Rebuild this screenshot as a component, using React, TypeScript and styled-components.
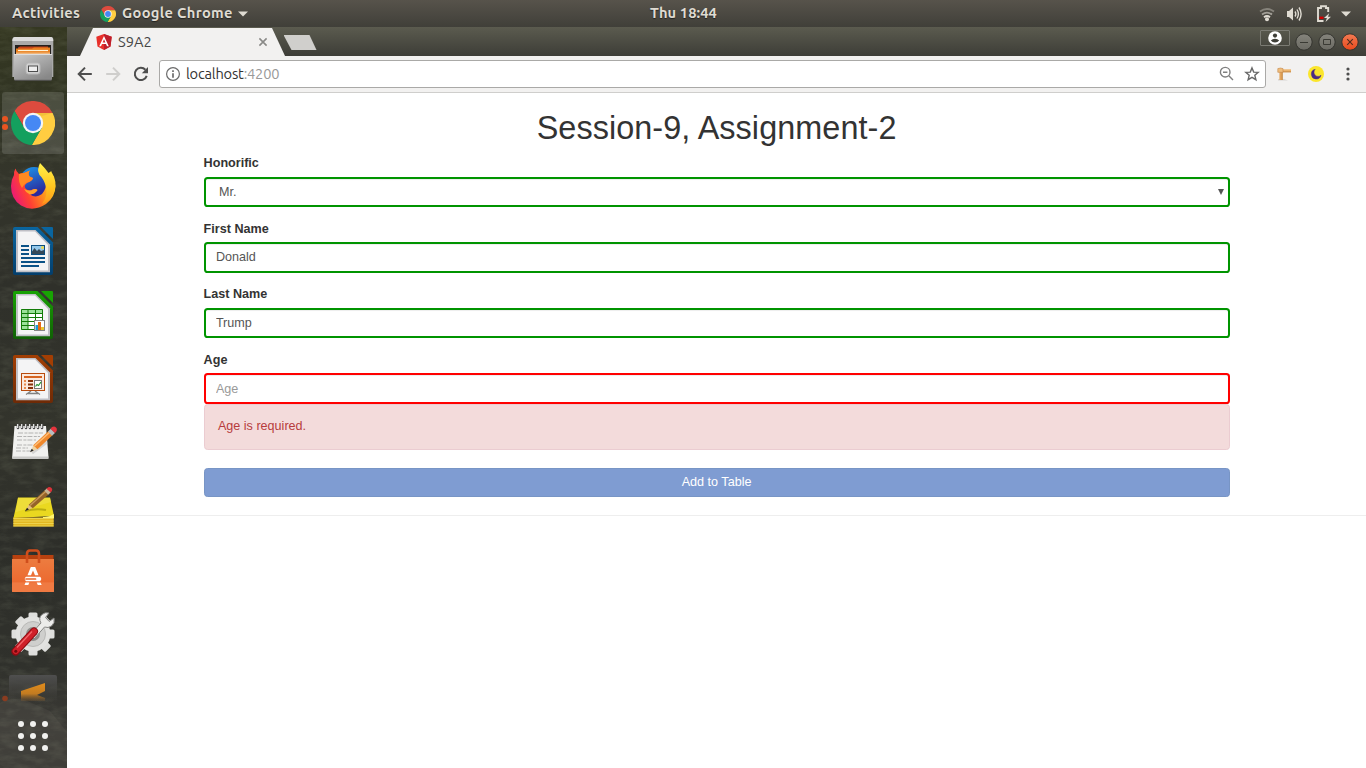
import React from "react";
import styled, { createGlobalStyle } from "styled-components";

const GlobalStyle = createGlobalStyle`
  *, *::before, *::after { box-sizing: border-box; }
  html, body { margin: 0; padding: 0; }
  body { width: 1366px; height: 768px; overflow: hidden; background: #fff; }
  svg { display: block; flex: none; }
`;

const uiFont = `"Ubuntu", "Noto Sans", "Open Sans", sans-serif`;
const pageFont = `"Liberation Sans", Arial, sans-serif`;

/* ---------- layout ---------- */

const Desktop = styled.div`
  display: flex;
  flex-direction: column;
  width: 1366px;
  height: 768px;
  overflow: hidden;
`;

const TopBar = styled.header`
  display: grid;
  grid-template-columns: 638px auto 1fr;
  align-items: center;
  height: 27px;
  flex: none;
  padding: 0 15px 0 12px;
  background: linear-gradient(#57534b, #403f39);
  color: #dfdbd2;
  font: 700 14.67px/26px ${uiFont};
  text-shadow: 0 1px 1px rgba(0, 0, 0, 0.5);
`;

const BarGroup = styled.div<{ $end?: boolean }>`
  display: flex;
  align-items: center;
  justify-content: ${(p) => (p.$end ? "flex-end" : "flex-start")};
`;

const BarLabel = styled.span<{ $width: number; $spacing?: number }>`
  width: ${(p) => p.$width}px;
  height: 27px;
  white-space: nowrap;
  letter-spacing: ${(p) => p.$spacing ?? 0}px;
`;

const AppMenu = styled.div`
  display: flex;
  align-items: center;
  gap: 6px;
  margin-left: 20px;
`;

const Tray = styled.div`
  display: flex;
  align-items: center;
`;

const Workspace = styled.div`
  display: flex;
  flex: 1;
  min-height: 0;
`;

const DockBar = styled.nav`
  position: relative;
  display: flex;
  flex-direction: column;
  width: 67px;
  flex: none;
  background: linear-gradient(#353822 0, #313423 70px, #34352b 150px, #2f302a 260px, #33342c 400px, #2d2e29 520px, #30312c 640px, #3a3935 700px, #32322e 741px);
`;

const Wallpaper = styled.svg`
  position: absolute;
  inset: 0;
`;

const Slot = styled.div<{ $height?: number }>`
  position: relative;
  width: 67px;
  height: ${(p) => p.$height ?? 64}px;
  flex: none;
`;

const Browser = styled.div`
  display: flex;
  flex-direction: column;
  flex: 1;
  min-width: 0;
  background: #fff;
`;

const TabStrip = styled.div`
  display: flex;
  justify-content: space-between;
  height: 29px;
  flex: none;
  background: linear-gradient(#5b5b4f, #3d3d37);
`;

const Tabs = styled.div`
  display: flex;
  padding: 1px 0 0 13px;
`;

const Tab = styled.div`
  display: flex;
  align-items: center;
  width: 205px;
  height: 28px;
  padding: 0 17px 0 16px;
  background: #f2f1f0;
  clip-path: polygon(13px 0, 192px 0, 205px 100%, 0 100%);
  font: 400 14.67px/28px ${uiFont};
  color: #454545;
`;

const TabTitle = styled.span`
  flex: 1;
  padding-left: 6px;
`;

const NewTab = styled.div`
  width: 33px;
  height: 15px;
  margin: 7px 0 0 -1.5px;
  background: #d0cfcc;
  clip-path: polygon(0 0, 26px 0, 33px 100%, 8px 100%);
`;

const WindowControls = styled.div`
  display: flex;
  gap: 5px;
  padding: 6px 7px 0 0;
`;

const Profile = styled.div`
  display: flex;
  justify-content: center;
  width: 30px;
  height: 16px;
  margin-top: -3px;
  border: 1px solid #7b7b73;
  border-radius: 1px;
`;

const Toolbar = styled.div`
  display: flex;
  align-items: center;
  height: 37px;
  flex: none;
  padding: 0 16px 0 10px;
  background: #f2f1f0;
  border-bottom: 1px solid #cfcecc;
`;

const NavButtons = styled.div`
  display: flex;
  gap: 12px;
  width: 82px;
`;

const AddressBar = styled.div`
  display: flex;
  align-items: center;
  width: 1107px;
  height: 28px;
  padding: 0 5px 0 6px;
  background: #fff;
  border: 1px solid #aaa9a7;
  border-radius: 3px;
  font: 400 14.67px/26px ${uiFont};
  color: #333;
`;

const Url = styled.span`
  flex: 1;
  padding: 0 0 1px 5px;
  letter-spacing: -0.22px;
`;

const Port = styled.span`
  color: #999;
`;

const BarActions = styled.div`
  display: flex;
  gap: 10px;
`;

const Extensions = styled.div`
  display: flex;
  flex: 1;
  justify-content: flex-end;
  align-items: center;
  gap: 16px;
  > :last-child { margin-left: 6px; }
`;

const Page = styled.main`
  flex: 1;
  font: 400 12.6px/18px ${pageFont};
  color: #333;
`;

const Container = styled.form`
  display: flex;
  flex-direction: column;
  width: 1026px;
  margin: 0 auto 0 136.6px;
`;

const Title = styled.h1`
  margin: 16px 0 7px;
  font: 400 32.4px/38px ${pageFont};
  letter-spacing: 0.07px;
  text-align: center;
`;

const Group = styled.div<{ $height: number }>`
  display: flex;
  flex-direction: column;
  height: ${(p) => p.$height}px;
`;

const Label = styled.label`
  height: 18px;
  margin-bottom: 4.5px;
  font-weight: 700;
`;

const Field = styled.input<{ $valid: boolean }>`
  width: 100%;
  height: 30.6px;
  padding: 0 10.3px;
  border: 2px solid ${(p) => (p.$valid ? "#009400" : "#ff0000")};
  border-radius: 3.6px;
  box-shadow: inset 0 1px 1px rgba(0, 0, 0, 0.075);
  background: #fff;
  color: #555;
  font: 400 12.6px/18px ${pageFont};
  outline: none;
  &::placeholder { color: #999; opacity: 1; }
`;

const SelectBox = styled.div`
  position: relative;
`;

const Select = styled.select`
  display: block;
  appearance: none;
  width: 100%;
  height: 30px;
  padding: 0 13.4px;
  border: 2px solid #009400;
  border-radius: 3.6px;
  box-shadow: inset 0 1px 1px rgba(0, 0, 0, 0.075);
  background: #fff;
  color: #555;
  font: 400 12.6px/18px ${pageFont};
`;

const SelectArrow = styled.svg`
  position: absolute;
  right: 6px;
  top: 12px;
`;

const Alert = styled.div`
  height: 46px;
  margin-bottom: 18px;
  padding: 12.4px 13.3px;
  border: 1px solid #ebccd1;
  border-radius: 3.6px;
  background: #f3dbdb;
  color: #b73b3d;
`;

const SubmitButton = styled.button`
  height: 29px;
  margin: 0;
  padding: 0 0 1px;
  border: 1px solid #7895c5;
  border-radius: 3.6px;
  background: #7f9cd2;
  color: #fff;
  font: 400 12.6px/18px ${pageFont};
`;

const Divider = styled.hr`
  height: 1px;
  margin: 18px 0 0;
  border: 0;
  background: #eee;
`;

/* ---------- icons ---------- */

const ChromeLogo = ({ size }: { size: number }) => (
  <svg width={size} height={size} viewBox="-22 -22 44 44">
    <path d="M-8.66 5L-18.46 -11.97A22 22 0 0 1 19.6 -10H0Z" fill="#dd4b3e" />
    <path d="M0-10H19.6A22 22 0 0 1-1.14 21.97L8.66 5Z" fill="#ffcd41" />
    <path d="M8.66 5L-1.14 21.97A22 22 0 0 1-18.46-11.97L-8.66 5Z" fill="#14a05e" />
    <path d="M0-10H19.6L9-7Z" fill="#d9a82e" opacity=".35" />
    <circle r="10.2" fill="#f5f5f5" />
    <circle r="8" fill="#4688f4" />
  </svg>
);

const CaretIcon = styled.svg<{ $gap?: number }>`
  margin-left: ${(p) => p.$gap ?? 0}px;
`;

const Caret = ({ gap }: { gap?: number }) => (
  <CaretIcon $gap={gap} width="10" height="6" viewBox="0 0 10 6"><path d="M0 .5H10L5 5.5Z" fill="#dfdbd2" /></CaretIcon>
);

const TrayIcon = styled.svg<{ $gap?: number }>`
  margin-left: ${(p) => p.$gap ?? 0}px;
`;

const TrayIcons = () => (
  <Tray>
    <TrayIcon width="16" height="18" viewBox="0 0 16 18" fill="none" strokeWidth="1.8">
      <path d="M1 6.5Q8 1.5 15 6.5" stroke="#86837b" />
      <path d="M3 9.5Q8 5.8 13 9.5" stroke="#a29f97" />
      <path d="M5 12.3Q8 9.8 11 12.3" stroke="#dfdbd2" />
      <circle cx="8" cy="14.3" r="2" fill="#dfdbd2" />
    </TrayIcon>
    <TrayIcon $gap={11} width="17" height="18" viewBox="0 0 17 18" fill="none" stroke="#dfdbd2" strokeWidth="1.4">
      <path d="M1 6H3L7 2.5V15.5L3 12H1Z" fill="#dfdbd2" stroke="none" />
      <path d="M9 6.5Q10.6 9 9 11.5M11 4.5Q13.8 9 11 13.5M13 2.5Q17.2 9 13 15.5" />
    </TrayIcon>
    <TrayIcon $gap={13} width="16" height="18" viewBox="0 0 16 18">
      <path d="M12.2 7V3H10V1.3H5V3H2V16H7.5" fill="none" stroke="#dfdbd2" strokeWidth="1.9" />
      <path d="M3.5 11.6H7.5V14H3.5Z" fill="#d40000" />
      <path d="M13.2 8.3L8 13H10.9L9.5 17L15 11.8H12Z" fill="#dfdbd2" />
    </TrayIcon>
    <Caret gap={9} />
  </Tray>
);

const AngularLogo = () => (
  <svg width="16" height="16" viewBox="0 0 16 16">
    <path d="M8 0L15.7 2.7L14.5 12.4L8 16L1.5 12.4L.3 2.7Z" fill="#e8302a" />
    <path d="M8 0L15.7 2.7L14.5 12.4L8 16Z" fill="#bd1f2b" />
    <path d="M8 1.9L3.2 12.2H5L6 9.9H10L11 12.2H12.8ZM8 5.2L9.4 8.4H6.6Z" fill="#fff" fillRule="evenodd" />
  </svg>
);

const TabClose = () => (
  <svg width="10" height="10" viewBox="0 0 10 10"><path d="M1.4 1.4L8.6 8.6M8.6 1.4L1.4 8.6" stroke="#8a8a88" strokeWidth="1.6" /></svg>
);

const WindowButton = ({ kind }: { kind: "min" | "max" | "close" }) => {
  const close = kind === "close";
  return (
    <svg width="18" height="18" viewBox="0 0 18 18" fill="none">
      <defs>
        <linearGradient id={`wb-${kind}`} x2="0" y2="1">
          <stop stopColor={close ? "#f37b53" : "#85847c"} />
          <stop offset="1" stopColor={close ? "#e8491c" : "#6b6a63"} />
        </linearGradient>
      </defs>
      <circle cx="9" cy="9" r="8.2" fill={`url(#wb-${kind})`} stroke="#34342f" />
      {kind === "min" && <path d="M5 9.5H13" stroke="#3a3a34" strokeWidth="1" />}
      {kind === "max" && <path d="M5.5 6.5H12.5V11.5H5.5Z" stroke="#3a3a34" strokeWidth="1" />}
      {close && <path d="M6.2 6.2L11.8 11.8M11.8 6.2L6.2 11.8" stroke="#4c2c1e" strokeWidth="1.1" />}
    </svg>
  );
};

const ProfileIcon = () => (
  <svg width="14" height="14" viewBox="0 0 14 14">
    <circle cx="7" cy="7" r="6.8" fill="#fff" />
    <circle cx="7" cy="4.6" r="2.1" fill="#3f3f38" />
    <path d="M2.8 9.6Q4.4 7.7 7 7.7T11.2 9.6Q9.6 11.5 7 11.5T2.8 9.6Z" fill="#3f3f38" />
  </svg>
);

const Arrow = ({ forward }: { forward?: boolean }) => (
  <svg width="16" height="16" viewBox="0 0 16 16" fill="none" stroke={forward ? "#cfcecc" : "#4e4e4e"} strokeWidth="2">
    {forward ? <path d="M1.2 8H14M8 1.6L14.3 8L8 14.4" /> : <path d="M14.8 8H2M8 1.6L1.7 8L8 14.4" />}
  </svg>
);

const Reload = () => (
  <svg width="16" height="16" viewBox="0 0 16 16" fill="none">
    <path d="M13.7 9.9A6.1 6.1 0 1 1 12.4 3.8" stroke="#4e4e4e" strokeWidth="2" />
    <path d="M15 1V7.2H8.8Z" fill="#4e4e4e" />
  </svg>
);

const InfoIcon = () => (
  <svg width="15" height="15" viewBox="0 0 15 15" fill="none" stroke="#6b6b6b">
    <circle cx="7" cy="7" r="6.4" strokeWidth="1.2" />
    <path d="M7 6.2V10.8M7 3.3V4.9" strokeWidth="1.7" />
  </svg>
);

const ZoomOut = () => (
  <svg width="15" height="15" viewBox="0 0 15 15" fill="none" stroke="#808080" strokeWidth="1.4">
    <circle cx="6.2" cy="6.2" r="4.8" /><path d="M4 6.2H8.4M9.8 9.8L14 14" />
  </svg>
);

const Star = () => (
  <svg width="16" height="16" viewBox="0 0 16 16" fill="none" stroke="#686868" strokeWidth="1.4">
    <path d="M8 1.9L9.7 6.1L14.2 6.4L10.8 9.3L11.9 13.7L8 11.3L4.1 13.7L5.2 9.3L1.8 6.4L6.3 6.1Z" />
  </svg>
);

const HammerExt = () => (
  <svg width="16" height="16" viewBox="0 0 16 16">
    <path d="M2 14.5H12L8 13H2Z" fill="#d8d6d3" />
    <path d="M6 3.3H15V6.3H6Z" fill="#eeb56d" /><path d="M6 5.8H15" stroke="#bd8140" strokeWidth=".8" />
    <path d="M3.4 5.5H6.6V14H3.4Z" fill="#e5a55b" /><path d="M6.2 6V14" stroke="#b9803c" strokeWidth=".8" />
    <path d="M1.8 2.6Q4.5 1.5 7 2.6V6.3H1.8Z" fill="#efbd7c" stroke="#c5884a" strokeWidth=".6" />
  </svg>
);

const MoonExt = () => (
  <svg width="16" height="16" viewBox="0 0 16 16">
    <circle cx="8" cy="8" r="8" fill="#fbe62c" />
    <path d="M7.2 3.3A4.9 4.9 0 1 0 13 9.2A3 3 0 1 1 7.2 3.3Z" fill="#4b2b84" stroke="#4b2b84" strokeWidth=".5" />
  </svg>
);

const MenuDots = () => (
  <svg width="4" height="16" viewBox="0 0 4 16" fill="#4e4e4e"><circle cx="2" cy="3" r="1.6" /><circle cx="2" cy="8" r="1.6" /><circle cx="2" cy="13" r="1.6" /></svg>
);

/* ---------- dock icons ---------- */

const DockSvg = ({ children, height = 64 }: { children: React.ReactNode; height?: number }) => (
  <svg width="67" height={height} viewBox={`0 0 67 ${height}`}>{children}</svg>
);

const FilesIcon = () => (
  <DockSvg>
    <defs>
      <linearGradient id="metal" x2=".7" y2="1"><stop stopColor="#c9c9c9" /><stop offset="1" stopColor="#888" /></linearGradient>
    </defs>
    <path d="M15 10H51Q53 10 53.3 12V50H12.3V12Q12.7 10 15 10Z" fill="#aaa" />
    <path d="M15 10H51Q53 10 53.3 14H12.3Q12.7 10 15 10Z" fill="#dcdcdc" />
    <path d="M15 18H51V29H15Z" fill="#25201d" />
    <path d="M20 19.5H48V22H18V20.5Z" fill="#c4431b" />
    <path d="M16 21.5H32L34 20.5H50V28H16Z" fill="#e9801f" />
    <path d="M18 23.5H48" stroke="#fff3d8" strokeWidth="1.2" />
    <path d="M16 25.5H50V28H16Z" fill="#f1b67a" />
    <path d="M14 28H52V52Q52 53 51 53H15Q14 53 14 52Z" fill="url(#metal)" />
    <path d="M14 27.5H52" stroke="#dedede" />
    <path d="M14.5 53.3H51.5" stroke="#585858" />
    <rect x="26" y="36" width="14" height="11" rx="2.5" fill="#d1d1d1" stroke="#b7b7b7" />
    <rect x="28.5" y="39" width="9" height="5.5" fill="#eee" stroke="#4d4d4d" />
  </DockSvg>
);

const ChromeSlot = styled(Slot)`
  display: flex;
  align-items: center;
  padding-left: 11px;
  &::before {
    content: "";
    position: absolute;
    inset: 1px 3px 1px 2px;
    border-radius: 3px;
    background: rgba(255, 255, 255, 0.13);
  }
  > svg { position: relative; }
`;

const RunningDots = styled.div`
  position: absolute;
  left: 2px;
  top: 25px;
  display: grid;
  gap: 2px;
`;

const RunningDot = styled.i`
  width: 6px;
  height: 6px;
  border-radius: 50%;
  background: #e95420;
`;

const FirefoxIcon = () => (
  <DockSvg>
    <defs>
      <linearGradient id="fox" x1=".95" y1=".25" x2=".05" y2=".6">
        <stop offset=".1" stopColor="#ffc61f" /><stop offset=".4" stopColor="#ff8a1e" /><stop offset=".72" stopColor="#ff4133" /><stop offset="1" stopColor="#ee1f6c" />
      </linearGradient>
      <linearGradient id="globe" x2=".4" y2="1"><stop stopColor="#1a9df0" /><stop offset=".9" stopColor="#2b2a9c" /></linearGradient>
      <linearGradient id="flame" x2="0" y2="1"><stop stopColor="#fff04a" /><stop offset=".6" stopColor="#ffc31e" /><stop offset="1" stopColor="#ff9a1c" /></linearGradient>
    </defs>
    <ellipse cx="34" cy="28" rx="15" ry="16" fill="url(#globe)" />
    <path d="M15.5 13.5Q16 16.5 19 19Q21.5 17.6 24 18L30 15.5Q27.5 18 29.5 21.5L33 23Q32.5 26 27 28Q23 31 26 34Q29 36.5 32.5 34.5Q35.5 33.5 37.5 35Q35 39 30 39.5Q36 43.5 42 39Q47 33 46 26L53.5 21L55.5 31Q55.3 42 46 49Q33 57.5 21 50.5Q11 44 11 31Q11 25 14 20Q13.5 17 15.5 13.5Z" fill="url(#fox)" />
    <path d="M40 8Q45 13 48.5 18Q52 15 51.5 17Q58 27 54 37Q50 46 42 49Q48 41 46 32Q44 24 39.5 20Q36.5 15 40 8Z" fill="url(#flame)" />
    <path d="M24 18L30 15.5Q27.5 18 29.5 21.5L33 23Q32 26 27 27.5Q23 30 22 33Q18 27 19 19Z" fill="#ff8a22" />
    <path d="M24 34Q30 37 33 34.4Q36 33.5 37.5 35Q35 39 30 39.5Q26 38 24 34Z" fill="#ffa22a" />
  </DockSvg>
);

const OfficeDoc = ({ color, fold, children }: { color: string; fold: string; children: React.ReactNode }) => (
  <DockSvg>
    <defs>
      <linearGradient id={`doc-${color.slice(1)}`} x2="0" y2="1"><stop stopColor={fold} /><stop offset="1" stopColor={color} /></linearGradient>
    </defs>
    <path d="M15 8H37.5L53 23.5V54Q53 56 51 56H15Q13 56 13 54V10Q13 8 15 8Z" fill={`url(#doc-${color.slice(1)})`} />
    <path d="M41 8H52Q53 8 53 9V20Z" fill={fold} />
    <path d="M16 11H35.5L50 25.5V53.3H16Z" fill="#bfbfc5" />
    <path d="M18 12.5H35L48 26V51.5H18Z" fill="#f4f4f5" />
    {children}
  </DockSvg>
);

const WriterIcon = () => (
  <OfficeDoc color="#033e6c" fold="#0a659f">
    <path d="M21 27H29M21 31H29M21 35H29M21 39H45M21 43H45M21 47H39" stroke="#0b5287" strokeWidth="2" />
    <rect x="31.5" y="26.5" width="13" height="9" fill="#94c8eb" stroke="#0b4e80" />
    <circle cx="42.5" cy="28.5" r="1.5" fill="#efd94c" />
    <path d="M32 35V32.5L34.5 29L37 32L39 30L41 32L44 31V35Z" fill="#344858" />
  </OfficeDoc>
);

const CalcIcon = () => (
  <OfficeDoc color="#106005" fold="#18a303">
    <path d="M21 26H43V47H21Z" fill="#fff" /><path d="M21 26H43V30H21ZM21 30H28V47H21Z" fill="#9be29a" />
    <path d="M21.5 26.5H42.5V46.5H21.5ZM28 26V47M35.5 26V47M21 30.5H43M21 34.5H43M21 38.5H43M21 42.5H43" fill="none" stroke="#127b08" />
    <rect x="34.5" y="37.5" width="10" height="10" fill="#fff" stroke="#858585" />
    <path d="M35.5 42H38V47H35.5Z" fill="#1e9bd5" /><path d="M38 39H41V47H38Z" fill="#e66c18" /><path d="M41 44H44V47H41Z" fill="#ecc62f" />
  </OfficeDoc>
);

const ImpressIcon = () => (
  <OfficeDoc color="#6e2a06" fold="#a33e03">
    <path d="M31 44L26 47.5M35 44L40 47.5M28 46.5H38" stroke="#818181" strokeWidth="1.4" fill="none" />
    <rect x="21.5" y="26.5" width="23" height="17" fill="#fbe9dd" stroke="#b84b0d" />
    <path d="M24 30H42" stroke="#d66421" strokeWidth="2" />
    <path d="M24 34H26M24 37.5H26M24 41H26" stroke="#e88b4e" strokeWidth="2" />
    <path d="M28 34H33M28 37.5H33M28 41H33" stroke="#87320a" strokeWidth="2" />
    <rect x="34.5" y="33.5" width="7" height="8" fill="#fff" stroke="#777" />
    <path d="M35.5 39.5L37 37.5L38.5 38.5L41 35" fill="none" stroke="#26942d" strokeWidth="1.2" />
  </OfficeDoc>
);

const GeditIcon = () => (
  <DockSvg>
    <path d="M14.5 15H46L48.5 46Q48.5 47.5 47 47.5H13Q12 47.5 12.2 46Z" fill="#f1f1ef" />
    <path d="M12.3 45.5H48.5V48H12.3Z" fill="#c9c9c7" />
    <path d="M18 22H43M17 25.5H40M17 29H36M17 34H33M16 37H28M16 40H31" stroke="#adadab" strokeWidth=".9" strokeDasharray="5 1.4 3 1" />
    <path d="M18 14V17M22 14V17M26 14V17M30 14V17M34 14V17M38 14V17M42 14V17" stroke="#4c4c4c" strokeWidth="2.6" strokeLinecap="round" />
    <path d="M17.6 13V17M21.6 13V17M25.6 13V17M29.6 13V17M33.6 13V17M37.6 13V17M41.6 13V17" stroke="#e1e1df" strokeWidth="1.3" />
    <path d="M32 42L47 31" stroke="#bbb" strokeWidth="3" opacity=".5" />
    <path d="M30.5 41L33.5 34L37.5 38Z" fill="#efd29f" /><path d="M30 41.3L31.7 37.8L33.7 39.6Z" fill="#292929" />
    <path d="M33.2 34.3L48.5 20L52.5 24.3L37.5 38.3Z" fill="#ef882c" />
    <path d="M34.5 35L49.7 21.2" stroke="#ffbd74" strokeWidth="1.5" />
    <path d="M48 20.5L51 17.5L55 22L52 24.8Z" fill="#b8bcc0" />
    <path d="M50.5 18Q52 15 55 15.7Q58 17.5 56.3 20.5L55 22Z" fill="#e5343d" />
  </DockSvg>
);

const NotesIcon = () => (
  <DockSvg>
    <path d="M18 22.5H50L54 41L13.5 43Z" fill="#ead820" /><path d="M18 23H50L51 27L16 37Z" fill="#f0e14b" opacity=".6" />
    <path d="M13.3 42.5H53.7V51.5H13.3Z" fill="#e2b822" />
    <path d="M13.3 43.5H53.7M13.3 46H53.7M13.3 48.5H53.7M13.3 51H53.7" stroke="#f3df62" strokeWidth=".7" />
    <path d="M43 42Q49 42.5 54 39V43H43Z" fill="#fff470" />
    <path d="M25 36Q36 33 46 35" stroke="#a1960b" strokeWidth="2" fill="none" opacity=".65" />
    <path d="M25.5 36L29 29.5L32.5 33Z" fill="#e2bc80" /><path d="M25 36.3L27 32.8L29 34.6Z" fill="#27251a" />
    <path d="M28.7 29.8L44.5 15.5L48.5 19.5L32.8 33.3Z" fill="#956329" /><path d="M30 30.5L45.7 16.5" stroke="#c99a58" strokeWidth="1.3" />
    <path d="M44.3 15.7L47 13.2L51 17L48.2 19.7Z" fill="#c7b494" />
    <path d="M46.5 13.7L48.2 12.2Q51 11.5 52.2 14Q52.5 16 50.7 17.4Z" fill="#d93239" />
  </DockSvg>
);

const SoftwareIcon = () => (
  <DockSvg>
    <defs><linearGradient id="bag" x2="0" y2="1"><stop stopColor="#ec7c40" /><stop offset=".7" stopColor="#ec6a30" /><stop offset=".72" stopColor="#f07a42" /></linearGradient></defs>
    <path d="M12.5 16H53.5V20.5H12.5Z" fill="#b8410f" />
    <path d="M12 20H54V52.5Q54 53 53 53H13Q12 53 12 52.5Z" fill="url(#bag)" />
    <path d="M27 24V15Q27 11.5 30 11.5H36Q39 11.5 39 15V24" fill="none" stroke="#cf4e1c" strokeWidth="2.6" />
    <path d="M30.8 28H35.2L38.5 36.2H35L33 31.5L31 36.2H27.5Z" fill="#fff" />
    <path d="M26 37.8H40Q42.5 40 40 42.3H26Q23.5 40 26 37.8Z" fill="#fff" />
    <path d="M26 40H35.5" stroke="#e96a32" strokeWidth="1.7" strokeLinecap="round" />
    <path d="M25.5 43.5H29.3L28.3 46H24.5ZM36.7 43.5H40.5L41.7 46H37.8Z" fill="#fff" />
  </DockSvg>
);

const SettingsIcon = () => (
  <DockSvg>
    <g transform="translate(33 31)">
      {[0, 45, 90, 135].map((a) => (
        <rect key={a} x="-4.5" y="-21.5" width="9" height="43" rx="1.5" fill="#dededc" transform={`rotate(${a})`} />
      ))}
      <circle r="17.5" fill="#e2e2e0" /><circle r="12.5" fill="#cfcfcd" stroke="#b9b9b7" /><circle r="7" fill="#8e8e8b" />
    </g>
    <path d="M30 32L41 20Q38 15 42 11.5Q45 8.8 49 10L45.5 14.5L49.2 18.5L54 15Q55.2 20 51.5 23Q48 25.5 44.5 24L34 36Z" fill="#ececea" stroke="#858583" strokeWidth="1" />
    <path d="M15.5 48.5L34 28.5" stroke="#8c0b12" strokeWidth="8" strokeLinecap="round" />
    <path d="M15.8 48L34 28.5" stroke="#cf2029" strokeWidth="6.2" strokeLinecap="round" />
    <path d="M17 44.5L32 28.5" stroke="#f2676b" strokeWidth="1.2" />
    <circle cx="15.8" cy="48.3" r="1.5" fill="#71080e" />
  </DockSvg>
);

const SublimeIcon = () => (
  <DockSvg height={43}>
    <defs>
      <linearGradient id="tile" x2="0" y2="1"><stop stopColor="#4f4f4f" /><stop offset="1" stopColor="#45443f" stopOpacity="0" /></linearGradient>
      <linearGradient id="sub" x2="0" y2="1"><stop stopColor="#e28c1b" /><stop offset=".6" stopColor="#c27b21" /><stop offset="1" stopColor="#80592c" stopOpacity=".25" /></linearGradient>
    </defs>
    <path d="M9 10Q9 8 11 8H55Q57 8 57 10V36H9Z" fill="url(#tile)" />
    <path d="M21 24L45 16V24L37 28L45 31V34H21Z" fill="url(#sub)" />
    <circle cx="5" cy="31.5" r="2.8" fill="#8a3c20" />
  </DockSvg>
);

const AppsGrid = styled.div`
  position: relative;
  display: grid;
  grid-template-columns: repeat(3, 6px);
  gap: 6px;
  padding: 11px 0 0 18px;
`;

const AppsDot = styled.i`
  width: 6px;
  height: 6px;
  border-radius: 50%;
  background: #f1f1ef;
`;

const Dock = () => (
  <DockBar>
    <Wallpaper width="67" height="741" viewBox="0 0 67 741">
      <filter id="grain" x="0" y="0" width="100%" height="100%">
        <feTurbulence type="fractalNoise" baseFrequency=".06 .14" numOctaves="4" seed="8" />
        <feColorMatrix values="0 0 0 0 .45  0 0 0 0 .48  0 0 0 0 .33  1.3 0 0 0 -.52" />
      </filter>
      <path d="M0 676Q10 670 25 673L50 684L67 705V741H0Z" fill="#4b4944" opacity=".5" />
      <rect width="67" height="741" filter="url(#grain)" opacity=".2" />
    </Wallpaper>
    <Slot><FilesIcon /></Slot>
    <ChromeSlot>
      <ChromeLogo size={44} />
      <RunningDots><RunningDot /><RunningDot /></RunningDots>
    </ChromeSlot>
    <Slot><FirefoxIcon /></Slot>
    <Slot><WriterIcon /></Slot>
    <Slot><CalcIcon /></Slot>
    <Slot><ImpressIcon /></Slot>
    <Slot><GeditIcon /></Slot>
    <Slot><NotesIcon /></Slot>
    <Slot><SoftwareIcon /></Slot>
    <Slot><SettingsIcon /></Slot>
    <Slot $height={43}><SublimeIcon /></Slot>
    <AppsGrid>{Array.from({ length: 9 }, (_, i) => <AppsDot key={i} />)}</AppsGrid>
  </DockBar>
);

export default function App() {
  return (
    <Desktop>
      <GlobalStyle />
      <TopBar>
        <BarGroup>
          <BarLabel $width={68} $spacing={0.3}>Activities</BarLabel>
          <AppMenu>
            <ChromeLogo size={16} />
            <BarLabel $width={110} $spacing={0.33}>Google Chrome</BarLabel>
            <Caret />
          </AppMenu>
        </BarGroup>
        <BarLabel $width={68} $spacing={0.1}>Thu 18:44</BarLabel>
        <BarGroup $end><TrayIcons /></BarGroup>
      </TopBar>
      <Workspace>
        <Dock />
        <Browser>
          <TabStrip>
            <Tabs>
              <Tab><AngularLogo /><TabTitle>S9A2</TabTitle><TabClose /></Tab>
              <NewTab />
            </Tabs>
            <WindowControls>
              <Profile><ProfileIcon /></Profile>
              <WindowButton kind="min" />
              <WindowButton kind="max" />
              <WindowButton kind="close" />
            </WindowControls>
          </TabStrip>
          <Toolbar>
            <NavButtons><Arrow /><Arrow forward /><Reload /></NavButtons>
            <AddressBar>
              <InfoIcon />
              <Url>localhost<Port>:4200</Port></Url>
              <BarActions><ZoomOut /><Star /></BarActions>
            </AddressBar>
            <Extensions><HammerExt /><MoonExt /><MenuDots /></Extensions>
          </Toolbar>
          <Page>
            <Container>
              <Title>Session-9, Assignment-2</Title>
              <Group $height={65.6}>
                <Label>Honorific</Label>
                <SelectBox>
                  <Select defaultValue="Mr."><option>Mr.</option></Select>
                  <SelectArrow width="6" height="6" viewBox="0 0 6 6"><path d="M0 0H6L3 6Z" fill="#555" /></SelectArrow>
                </SelectBox>
              </Group>
              <Group $height={65.6}>
                <Label>First Name</Label>
                <Field $valid readOnly value="Donald" />
              </Group>
              <Group $height={65.6}>
                <Label>Last Name</Label>
                <Field $valid readOnly value="Trump" />
              </Group>
              <Group $height={53.2}>
                <Label>Age</Label>
                <Field $valid={false} readOnly placeholder="Age" />
              </Group>
              <Alert>Age is required.</Alert>
              <SubmitButton type="button">Add to Table</SubmitButton>
            </Container>
            <Divider />
          </Page>
        </Browser>
      </Workspace>
    </Desktop>
  );
}
